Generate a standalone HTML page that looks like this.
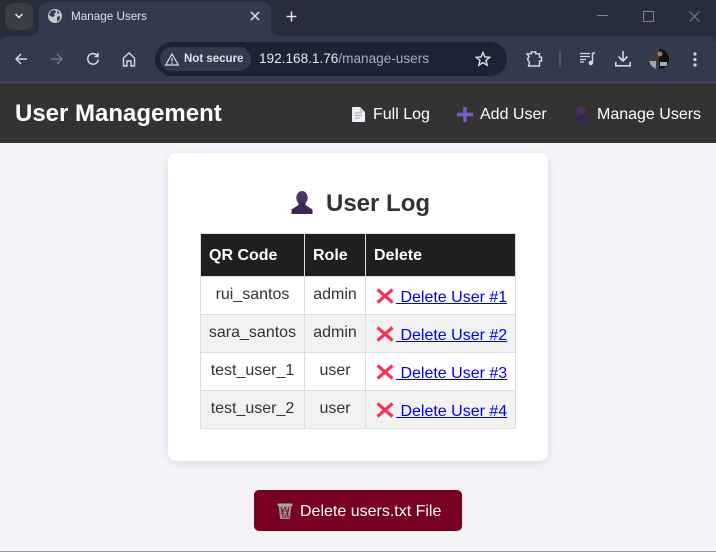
<!DOCTYPE html>
<html><head><meta charset="utf-8"><title>Manage Users</title>
<style>
html,body{margin:0;padding:0;width:716px;height:552px;overflow:hidden;background:#f3f3f8;font-family:"Liberation Sans",sans-serif}
.a{position:absolute}
.t{position:absolute;white-space:nowrap}
svg{position:absolute;overflow:visible}
table{position:absolute;left:200px;top:233px;width:315px;border-collapse:collapse;table-layout:fixed;font-size:16px;color:#333}
td,th{border:1px solid #ddd;padding:0;text-align:center}
th{background:#1f1f1f;color:#fff;font-weight:bold;text-align:left;padding:1px 0 0 8px;height:41px}
td{height:35px;padding-bottom:2px}
tr.o td{background:#f2f2f2}
td a{color:#00e;text-decoration:underline;display:block;text-align:left;padding-left:9px;position:relative;top:3px;white-space:pre}
.x{display:inline-block;width:21px;height:16px;position:relative;vertical-align:-2px}
</style></head><body>
<div class="a" style="left:0;top:0;width:716px;height:60px;background:#272d3a"></div>
<div class="a" style="left:5px;top:3px;width:28px;height:27px;border-radius:8px;background:#3a3d45"></div>
<svg style="left:14px;top:12px" width="10" height="8"><path d="M1.5 2 L5 5.5 L8.500 2" fill="none" stroke="#e8eaed" stroke-width="1.500"/></svg>
<div class="a" style="left:39px;top:2px;width:232px;height:34px;border-radius:9px 9px 0 0;background:#323b4d"></div>
<svg style="left:271px;top:27px" width="9" height="9"><path d="M0 0 A9 9 0 0 0 9 9 H0Z" fill="#323b4d"/></svg>
<svg style="left:30px;top:27px" width="9" height="9"><path d="M9 0 A9 9 0 0 1 0 9 H9Z" fill="#323b4d"/></svg>
<svg style="left:48px;top:9px" width="14" height="14" viewBox="0 0 14 14"><circle cx="7" cy="7" r="7" fill="#c4c7cc"/><path d="M3 2 L7 1 L8 3 L6 5 L7 7 L4 8 L1 6Z M9 8 L12 7 L11.500 11 L9 12.500Z M9 1.500 L12 4 L9.500 4.500Z" fill="#323b4d"/></svg>
<div class="t" style="left:71px;top:10px;font-size:11.7px;color:#dfe1e5">Manage Users</div>
<svg style="left:250px;top:11px" width="10" height="10"><path d="M1 1 L9 9 M9 1 L1 9" stroke="#e3e5e8" stroke-width="1.500"/></svg>
<svg style="left:286px;top:11px" width="11" height="11"><path d="M5.500 0.500 V10.500 M0.500 5.500 H10.500" stroke="#e3e5e8" stroke-width="1.500"/></svg>
<div class="a" style="left:597px;top:15px;width:11px;height:1px;background:#7d828c"></div>
<div class="a" style="left:643px;top:11px;width:9px;height:9px;border:1px solid #7d828c"></div>
<svg style="left:689px;top:11px" width="11" height="11"><path d="M0.500 0.500 L10.500 10.500 M10.500 0.500 L0.500 10.500" stroke="#7d828c" stroke-width="1"/></svg>

<div class="a" style="left:0;top:36px;width:716px;height:46px;background:#323b4d;border-radius:9px 9px 0 0"></div>
<div class="a" style="left:0;top:82px;width:716px;height:1px;background:#454c5a"></div>
<svg style="left:14px;top:52px" width="14" height="14"><path d="M13 7 H2 M7 2 L2 7 L7 12" fill="none" stroke="#d5d8dc" stroke-width="1.500"/></svg>
<svg style="left:50px;top:52px" width="14" height="14"><path d="M1 7 H12 M7 2 L12 7 L7 12" fill="none" stroke="#6f7684" stroke-width="1.500"/></svg>
<svg style="left:86px;top:52px" width="14" height="14"><path d="M11.500 4 A5.300 5.300 0 1 0 12.300 7.500 M12 1 V4.500 H8.500" fill="none" stroke="#d5d8dc" stroke-width="1.500"/></svg>
<svg style="left:122px;top:52px" width="14" height="15"><path d="M1.500 6 L7 1 L12.500 6 V14 H9 V9 H5 V14 H1.500Z" fill="none" stroke="#d5d8dc" stroke-width="1.400"/></svg>
<div class="a" style="left:155px;top:42px;width:352px;height:34px;border-radius:17px;background:#1b2435"></div>
<div class="a" style="left:160px;top:47px;width:91px;height:24px;border-radius:12px;background:#323b4d"></div>
<svg style="left:165px;top:53px" width="14" height="13"><path d="M7 1 L13.300 12 H0.700Z M7 5 V8.500 M7 9.500 V11" fill="none" stroke="#dfe1e5" stroke-width="1.200"/></svg>
<div class="t" style="left:184px;top:53px;font-size:11.5px;font-weight:bold;color:#dfe1e5">Not secure</div>
<div class="t" style="left:259px;top:51px;font-size:13.6px;color:#a9afba"><span style="color:#e8eaed">192.168.1.76</span>/manage-users</div>
<svg style="left:475px;top:51px" width="16" height="16" viewBox="0 0 16 16"><path d="M8 1.500 L9.900 6 L14.700 6.300 L11 9.400 L12.200 14.200 L8 11.600 L3.800 14.200 L5 9.400 L1.300 6.300 L6.100 6Z" fill="none" stroke="#dfe1e5" stroke-width="1.400"/></svg>
<svg style="left:526px;top:51px" width="16" height="16" viewBox="0 0 16 16"><path d="M1 2.800 H5.300 V1 H9.700 V2.800 H13.500 V6.200 H15.500 V10 H13.500 V15 H2.500 L3.500 11.500 L1.500 8 L3 5.500Z" fill="none" stroke="#d5d8dc" stroke-width="1.400"/></svg>
<div class="a" style="left:559px;top:51px;width:2px;height:16px;background:#4c5564"></div>
<svg style="left:580px;top:52px" width="16" height="14"><path d="M0 1.500 H10 M0 4.500 H10 M0 7.500 H6 M0 10 H4" stroke="#d5d8dc" stroke-width="1.300"/><path d="M12.500 1 H15 M12.500 1 V11" stroke="#d5d8dc" stroke-width="1.500" fill="none"/><circle cx="10.800" cy="11" r="2.200" fill="#d5d8dc"/></svg>
<svg style="left:615px;top:50px" width="16" height="17"><path d="M8 1 V11 M3.500 6.500 L8 11 L12.500 6.500 M0.800 12 V15.800 H15.200 V12" fill="none" stroke="#d5d8dc" stroke-width="1.600"/></svg>
<svg style="left:649px;top:49px" width="20" height="20"><defs><clipPath id="c"><circle cx="10" cy="10" r="10"/></clipPath></defs><g clip-path="url(#c)"><rect width="20" height="20" fill="#3d3d3d"/><rect x="0" y="12" width="7" height="8" fill="#a5a5a0"/><rect x="10" width="10" height="20" fill="#111"/><circle cx="11" cy="5" r="2.500" fill="#9a7c6c"/><rect x="11" y="13" width="7" height="4" fill="#a8adb5"/></g></svg>
<svg style="left:691px;top:51px" width="8" height="16"><circle cx="4" cy="3" r="1.600" fill="#d5d8dc"/><circle cx="4" cy="8.500" r="1.600" fill="#d5d8dc"/><circle cx="4" cy="14" r="1.600" fill="#d5d8dc"/></svg>

<div class="a" style="left:0;top:83px;width:716px;height:60px;background:#333"></div>
<div class="t" style="left:15px;top:100px;font-size:24px;font-weight:bold;color:#fff">User Management</div>
<svg style="left:352px;top:107px" width="13" height="15" viewBox="0 0 13 15"><path d="M0 1 Q0 0 1 0 H8 L13 5 V14 Q13 15 12 15 H1 Q0 15 0 14Z" fill="#efeff6"/><path d="M3 6 H10 M3 8.500 H10 M3 11 H8" stroke="#a7a7b4" stroke-width="1"/><path d="M8 0 V5 H13" fill="#cfcfdb"/></svg>
<div class="t" style="left:373px;top:106px;font-size:16px;color:#fff">Full Log</div>
<svg style="left:457px;top:107px" width="16" height="15"><path d="M8 0 V15 M0 7.500 H16" stroke="#7b5cc4" stroke-width="3.400"/></svg>
<div class="t" style="left:480px;top:106px;font-size:16px;color:#fff">Add User</div>
<svg style="left:574px;top:106px" width="15" height="16" viewBox="0 0 15 16"><ellipse cx="7.500" cy="4.800" rx="4" ry="4.800" fill="#4a2f63"/><path d="M5 8 H10 V10 L15 13 V16 H0 V13 L5 10Z" fill="#3c2551"/></svg>
<div class="t" style="left:597px;top:106px;font-size:16px;color:#fff">Manage Users</div>

<div class="a" style="left:168px;top:153px;width:380px;height:308px;background:#fff;border-radius:8px;box-shadow:0 2px 8px rgba(0,0,0,.1)"></div>
<svg style="left:291px;top:191px" width="22" height="23" viewBox="0 0 22 23"><ellipse cx="11" cy="6.800" rx="5.700" ry="6.800" fill="#4e3468"/><path d="M7.500 11 H14.500 V14 L21.500 18.500 V23 H0.500 V18.500 L7.500 14Z" fill="#3e2754"/></svg>
<div class="t" style="left:326px;top:190px;font-size:24px;font-weight:bold;color:#333">User Log</div>

<table>
<colgroup><col style="width:104px"><col style="width:61px"><col style="width:150px"></colgroup>
<tr><th>QR Code</th><th>Role</th><th>Delete</th></tr>
<tr><td>rui_santos</td><td>admin</td><td><a href="#"><span class="x"><svg style="left:1px;top:0" width="18" height="16"><path d="M1.500 1.500 L16.500 14.500 M16.500 1.500 L1.500 14.500" stroke="#f5325c" stroke-width="3.200"/></svg></span> Delete User #1</a></td></tr>
<tr class="o"><td>sara_santos</td><td>admin</td><td><a href="#"><span class="x"><svg style="left:1px;top:0" width="18" height="16"><path d="M1.500 1.500 L16.500 14.500 M16.500 1.500 L1.500 14.500" stroke="#f5325c" stroke-width="3.200"/></svg></span> Delete User #2</a></td></tr>
<tr><td>test_user_1</td><td>user</td><td><a href="#"><span class="x"><svg style="left:1px;top:0" width="18" height="16"><path d="M1.500 1.500 L16.500 14.500 M16.500 1.500 L1.500 14.500" stroke="#f5325c" stroke-width="3.200"/></svg></span> Delete User #3</a></td></tr>
<tr class="o"><td>test_user_2</td><td>user</td><td><a href="#"><span class="x"><svg style="left:1px;top:0" width="18" height="16"><path d="M1.500 1.500 L16.500 14.500 M16.500 1.500 L1.500 14.500" stroke="#f5325c" stroke-width="3.200"/></svg></span> Delete User #4</a></td></tr>
</table>

<div class="a" style="left:254px;top:490px;width:208px;height:41px;background:#780021;border-radius:5px"></div>
<svg style="left:277px;top:503px" width="16" height="16" viewBox="0 0 16 16"><path d="M0.500 0.500 H15.500 V3 H0.500Z" fill="#a9a5a6"/><path d="M1.500 3 H14.500 L12.800 16 H3.200Z" fill="#9a9092"/><path d="M4 4 L8 15 M8 4 L4.500 11 M8 4 L12 15 M12 4 L8 15 M5 8 L11 8 M4 4 L6 15 M12 4 L10 15" stroke="#780021" stroke-width=".6" fill="none"/></svg>
<div class="t" style="left:300px;top:503px;font-size:16px;color:#fff">Delete users.txt File</div>
<div class="a" style="left:0;top:551px;width:716px;height:1px;background:#9a9a9a"></div>
</body></html>
